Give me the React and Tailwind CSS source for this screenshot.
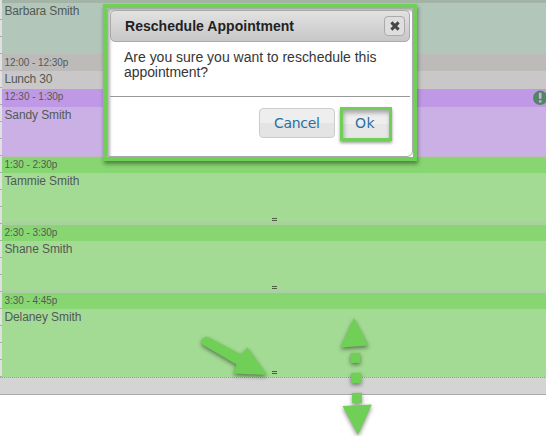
import React from "react";

const events = [
  { name: "Barbara Smith", time: "", box: "h-[54px]", head: "h-[3px] bg-[#a3b4a6]", body: "bg-[#b3c6ba]", tw: 75 },
  { name: "Lunch 30", time: "12:00 - 12:30p", timeW: 64, box: "h-[35px]", head: "h-[17px] pt-[3px] bg-[#bdbaba]", body: "bg-[#c9c7c7]", tw: 48 },
  { name: "Sandy Smith", time: "12:30 - 1:30p", timeW: 59, box: "h-[68px]", head: "h-[18px] pt-[2px] bg-[#c099e6]", body: "border-b border-[#c3b6c4] bg-[#cbb0e6]", tw: 67 },
  { name: "Tammie Smith", time: "1:30 - 2:30p", timeW: 53, box: "h-[68px]", head: "h-4 pt-[2px] bg-[#87d671]", body: "border-b-3 border-[#aad0a0] bg-[#a4db94]", tw: 75, grip: "mb-[1px]" },
  { name: "Shane Smith", time: "2:30 - 3:30p", timeW: 53, box: "h-[68px]", head: "h-4 pt-[2px] bg-[#87d671]", body: "border-b-3 border-[#aad0a0] bg-[#a4db94]", tw: 68, grip: "mb-[1px]" },
  { name: "Delaney Smith", time: "3:30 - 4:45p", timeW: 53, box: "h-[84px]", head: "h-4 pt-[2px] bg-[#87d671]", body: "bg-[#a4db94]", tw: 77, grip: "mb-[3px]" },
];

function FitText({ width, size, x = 0, y, children, bold, fill, family = "Liberation Sans, sans-serif" }) {
  return (
    <svg className="block overflow-visible" width={width} height={size + 2}>
      <text x={x} y={y} textLength={width} lengthAdjust="spacing" fontSize={size} fontWeight={bold ? 700 : 400} fill={fill} fontFamily={family}>
        {children}
      </text>
    </svg>
  );
}

function Event({ name, time, timeW, box, head, body, tw, grip }) {
  return (
    <div className={`flex w-full shrink-0 flex-col ${box}`}>
      <div className={`shrink-0 pl-[2px] ${head}`}>
        {time && <FitText width={timeW} size={10} x={0.4} y={9} fill="#545a56">{time}</FitText>}
      </div>
      <div className={`flex flex-1 flex-col justify-between pl-[2px] pt-[2px] ${body}`}>
        <FitText width={tw} size={12} x={0.4} y={10} fill="#525a54">{name}</FitText>
        {grip && (
          <div className={`ml-[268px] flex w-[5px] flex-col gap-px ${grip}`}>
            <span className="h-px bg-[#4c5c47]" />
            <span className="h-px bg-[#4c5c47]" />
          </div>
        )}
      </div>
    </div>
  );
}

function Dialog() {
  return (
    <div className="absolute left-[103px] top-[4px] h-[157px] w-[314px] border-4 border-[#70cf56] bg-white shadow-[1px_3px_4px_rgba(0,0,0,0.4)]">
      <div className="flex h-full flex-col rounded-br-md border border-[#aaa] px-[2px] pt-px shadow-[inset_2px_2px_3px_rgba(0,0,0,0.3)]">
        <div className="flex h-8 shrink-0 items-center justify-between rounded-[5px] border border-[#aaa] bg-linear-to-b from-[#e2e2e2] to-[#c7c7c7] pl-[14px] pr-[4px]">
          <FitText width={169} size={14} y={13} bold fill="#222">Reschedule Appointment</FitText>
          <button className="flex h-5 w-[21px] items-center justify-center rounded-[4px] border border-[#aaa] bg-[#dedede]" aria-label="Close">
            <svg width="10" height="10" viewBox="0 0 10 10">
              <path d="M1.4 1.4 8.6 8.6M8.6 1.4 1.4 8.6" stroke="#454545" strokeWidth="3" />
            </svg>
          </button>
        </div>
        <div className="flex h-[54px] shrink-0 flex-col pl-[14px] pt-[7px]">
          <FitText width={252.5} size={14} y={13} fill="#363636">Are you sure you want to reschedule this</FitText>
          <FitText width={84} size={14} y={12} fill="#363636">appointment?</FitText>
        </div>
        <div className="flex flex-1 justify-end gap-[5px] border-t border-[#999] pr-[18px] pt-[10px]">
          <button className="mt-[1px] flex h-[30px] w-[76px] items-center justify-center rounded-[4px] border border-[#ccc] bg-linear-to-b from-[#eeeeee] from-50% to-[#e4e4e4] to-50%">
            <FitText width={46} size={14} y={13} fill="#2771a1" family="DejaVu Sans, sans-serif">Cancel</FitText>
          </button>
          <button className="flex h-[34px] w-[52px] items-center justify-center border-[3px] border-[#70cf56] bg-linear-to-b from-[#eeeeee] from-50% to-[#e7e7e7] to-50% shadow-[0px_2px_3px_rgba(0,0,0,0.4),inset_1px_3px_4px_rgba(0,0,0,0.3)]">
            <FitText width={19.5} size={14} x={-1} y={12} fill="#2771a1" family="DejaVu Sans, sans-serif">Ok</FitText>
          </button>
        </div>
      </div>
    </div>
  );
}

export default function App() {
  return (
    <main className="relative h-[436px] w-[546px] overflow-hidden bg-white font-['Liberation_Sans',sans-serif]">
      <div className="flex h-[395px] flex-col border-b border-[#a9a9a9] bg-[#d4d4d4]">
        <div className="flex h-[377px] shrink-0">
          <div className="flex w-[2px] flex-col bg-[#e0e0e0] pt-[3px]">
            {Array.from({ length: 22 }, (_, i) => (
              <span key={i} className="h-[17px] shrink-0 border-b border-[#aaa]" />
            ))}
          </div>
          <div className="flex min-w-0 flex-1 flex-col">
            {events.map((e) => <Event key={e.name} {...e} />)}
          </div>
        </div>
        <div className="h-px bg-[repeating-linear-gradient(90deg,#9d9d9d_0_1px,#cecece_1px_2px)]" />
      </div>

      <svg className="absolute left-[532px] top-[90px]" width="14" height="16" viewBox="0 0 14 16">
        <circle cx="8.2" cy="7.8" r="7.2" fill="#548466" />
        <path d="M8.2 2.8V8.8M8.2 10.2V12.6" stroke="#c6b3df" strokeWidth="2.6" />
      </svg>

      <Dialog />

      <svg className="absolute left-0 top-[300px]" width="546" height="136" viewBox="0 0 546 136">
        <g fill="#70cf56" className="drop-shadow-[0px_2px_2px_rgba(0,0,0,0.45)]">
          <path d="M208.5 37.2Q205 36 202.3 39Q200 43 204 45.5L236.5 64.5L233.5 73.5L267 75L247.5 47.5L241 54.5Z" />
          <path d="M354 18L368.5 45.5L340.5 47.5Z" />
          <path d="M350.5 53L360.3 52.7L360.3 62.7L350.8 63Z" />
          <path d="M351 73L361 72.8L361.3 83L351.2 83.2Z" />
          <path d="M352 93L361.8 92.8L362 103L352.2 103.2Z" />
          <path d="M342.5 106L371.8 104.5L358 135Z" />
        </g>
      </svg>
    </main>
  );
}
